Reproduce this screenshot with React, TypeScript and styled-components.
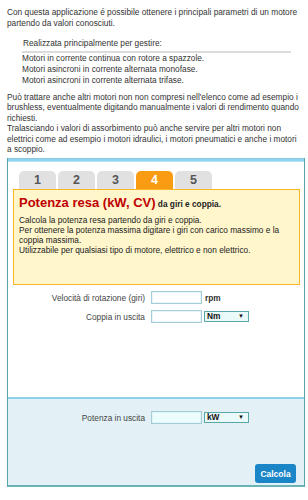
import React from "react";
import styled, { createGlobalStyle } from "styled-components";

const Global = createGlobalStyle`
  html, body { margin: 0; padding: 0; background: #ffffff; }
  body { font-family: "Liberation Sans", Arial, sans-serif; color: #333333; }
  * { box-sizing: border-box; }
`;

const Page = styled.div`
  width: 308px;
  padding: 7px 3px 0 7px;
  font-size: 8.3px;
`;

const Intro = styled.p`
  margin: 0;
  line-height: 11px;
  padding-right: 4px;
`;

const ListBlock = styled.div`
  margin: 9px 14px 0 15px;
`;

const ListHead = styled.div`
  line-height: 11px;
  padding-left: 1px;
  padding-bottom: 2px;
  border-bottom: 2px solid #dcdcdc;
`;

const ListItem = styled.div`
  line-height: 11px;
  &:first-of-type { margin-top: 3px; }
`;

const Note = styled.p`
  margin: 6px 0 0;
  line-height: 10.4px;
  padding-right: 4px;
`;

const Panel = styled.div`
  margin-top: 4px;
  width: 298px;
  border-left: 1px solid #5aa7a9;
  border-right: 1px solid #5aa7a9;
  border-bottom: 2px solid #69b4b4;
  box-shadow: 0 1px 1px rgba(0, 0, 0, 0.15);
`;

const PanelTop = styled.div`
  height: 4px;
  border-top: 1px solid #8cc9dc;
  background: #8ed4f0;
  border-bottom: 1px solid #b9e3f2;
`;

const Upper = styled.div`
  background: #ffffff;
  padding: 9px 4px 0 5px;
  height: 235px;
`;

const Tabs = styled.div`
  display: flex;
  gap: 2px;
  padding-left: 6px;
`;

const Tab = styled.div<{ $active?: boolean }>`
  width: 37px;
  height: 18px;
  border-radius: 5px 5px 0 0;
  background: ${(p) => (p.$active ? "#fa9b14" : "#e1e1e1")};
  color: ${(p) => (p.$active ? "#ffffff" : "#555555")};
  font-weight: bold;
  font-size: 12.5px;
  line-height: 19px;
  text-align: center;
`;

const InfoBox = styled.div`
  background: #fff6cc;
  border: 1.5px solid #fbb42c;
  height: 96px;
  padding: 5px 5px;
  color: #222222;
`;

const Title = styled.div`
  line-height: 16px;
  margin-bottom: 4px;
`;

const TitleBig = styled.span`
  color: #c00000;
  font-weight: bold;
  font-size: 13px;
`;

const TitleSmall = styled.span`
  font-weight: bold;
  font-size: 8.3px;
  color: #222222;
`;

const InfoLine = styled.div`
  line-height: 9.8px;
`;

const Form = styled.div`
  display: grid;
  grid-template-columns: 137px 51px auto;
  column-gap: 1px;
  row-gap: 6px;
  align-items: center;
  margin-top: 6px;
`;

const Label = styled.div`
  text-align: right;
  color: #444444;
  padding-right: 5px;
  line-height: 12px;
`;

const Field = styled.div<{ $tint?: boolean }>`
  width: 51px;
  height: 13px;
  border: 1px solid #a4cdd8;
  background: ${(p) => (p.$tint ? "#ebfdfd" : "#ffffff")};
  box-shadow: inset 0 0 0 0.5px #d8ecf0;
`;

const Unit = styled.div`
  font-weight: bold;
  color: #333333;
  padding-left: 2px;
`;

const Select = styled.div`
  margin-left: 1px;
  width: 45px;
  height: 11px;
  border: 1px solid #5aa7a9;
  background: #eaf9f9;
  display: flex;
  align-items: center;
  justify-content: space-between;
  padding: 0 4px 0 2px;
  font-weight: bold;
  color: #111111;
  font-size: 8.3px;
  line-height: 9px;
`;

const Caret = styled.span`
  font-size: 6px;
`;

const Lower = styled.div`
  background: #e3f1f6;
  border-top: 2px solid #8dd0ec;
  height: 88px;
  padding: 6px 8px 0 5px;
  display: flex;
  flex-direction: column;
`;

const Actions = styled.div`
  margin-top: auto;
  display: flex;
  justify-content: flex-end;
  padding-bottom: 2px;
`;

const Button = styled.button`
  width: 41px;
  height: 19px;
  border: none;
  border-radius: 3px;
  background: #1b86c7;
  color: #ffffff;
  font-family: "Liberation Sans", Arial, sans-serif;
  font-weight: bold;
  font-size: 8.5px;
  padding: 0;
`;

export default function App() {
  return (
    <>
      <Global />
      <Page>
        <Intro>
          Con questa applicazione é possibile ottenere i principali parametri di un motore partendo da valori conosciuti.
        </Intro>
        <ListBlock>
          <ListHead>Realizzata principalmente per gestire:</ListHead>
          <ListItem>Motori in corrente continua con rotore a spazzole.</ListItem>
          <ListItem>Motori asincroni in corrente alternata monofase.</ListItem>
          <ListItem>Motori asincroni in corrente alternata trifase.</ListItem>
        </ListBlock>
        <Note>
          Può trattare anche altri motori non non compresi nell'elenco come ad esempio i brushless, eventualmente digitando manualmente i valori di rendimento quando richiesti.
          <br />
          Tralasciando i valori di assorbimento può anche servire per altri motori non elettrici come ad esempio i motori idraulici, i motori pneumatici e anche i motori a scoppio.
        </Note>
        <Panel>
          <PanelTop />
          <Upper>
            <Tabs>
              <Tab>1</Tab>
              <Tab>2</Tab>
              <Tab>3</Tab>
              <Tab $active>4</Tab>
              <Tab>5</Tab>
            </Tabs>
            <InfoBox>
              <Title>
                <TitleBig>Potenza resa (kW, CV)</TitleBig> <TitleSmall>da giri e coppia.</TitleSmall>
              </Title>
              <InfoLine>Calcola la potenza resa partendo da giri e coppia.</InfoLine>
              <InfoLine>Per ottenere la potenza massima digitare i giri con carico massimo e la coppia massima.</InfoLine>
              <InfoLine>Utilizzabile per qualsiasi tipo di motore, elettrico e non elettrico.</InfoLine>
            </InfoBox>
            <Form>
              <Label>Velocità di rotazione (giri)</Label>
              <Field />
              <Unit>rpm</Unit>
              <Label>Coppia in uscita</Label>
              <Field />
              <Select>
                <span>Nm</span>
                <Caret>▼</Caret>
              </Select>
            </Form>
          </Upper>
          <Lower>
            <Form>
              <Label>Potenza in uscita</Label>
              <Field $tint />
              <Select>
                <span>kW</span>
                <Caret>▼</Caret>
              </Select>
            </Form>
            <Actions>
              <Button>Calcola</Button>
            </Actions>
          </Lower>
        </Panel>
      </Page>
    </>
  );
}
